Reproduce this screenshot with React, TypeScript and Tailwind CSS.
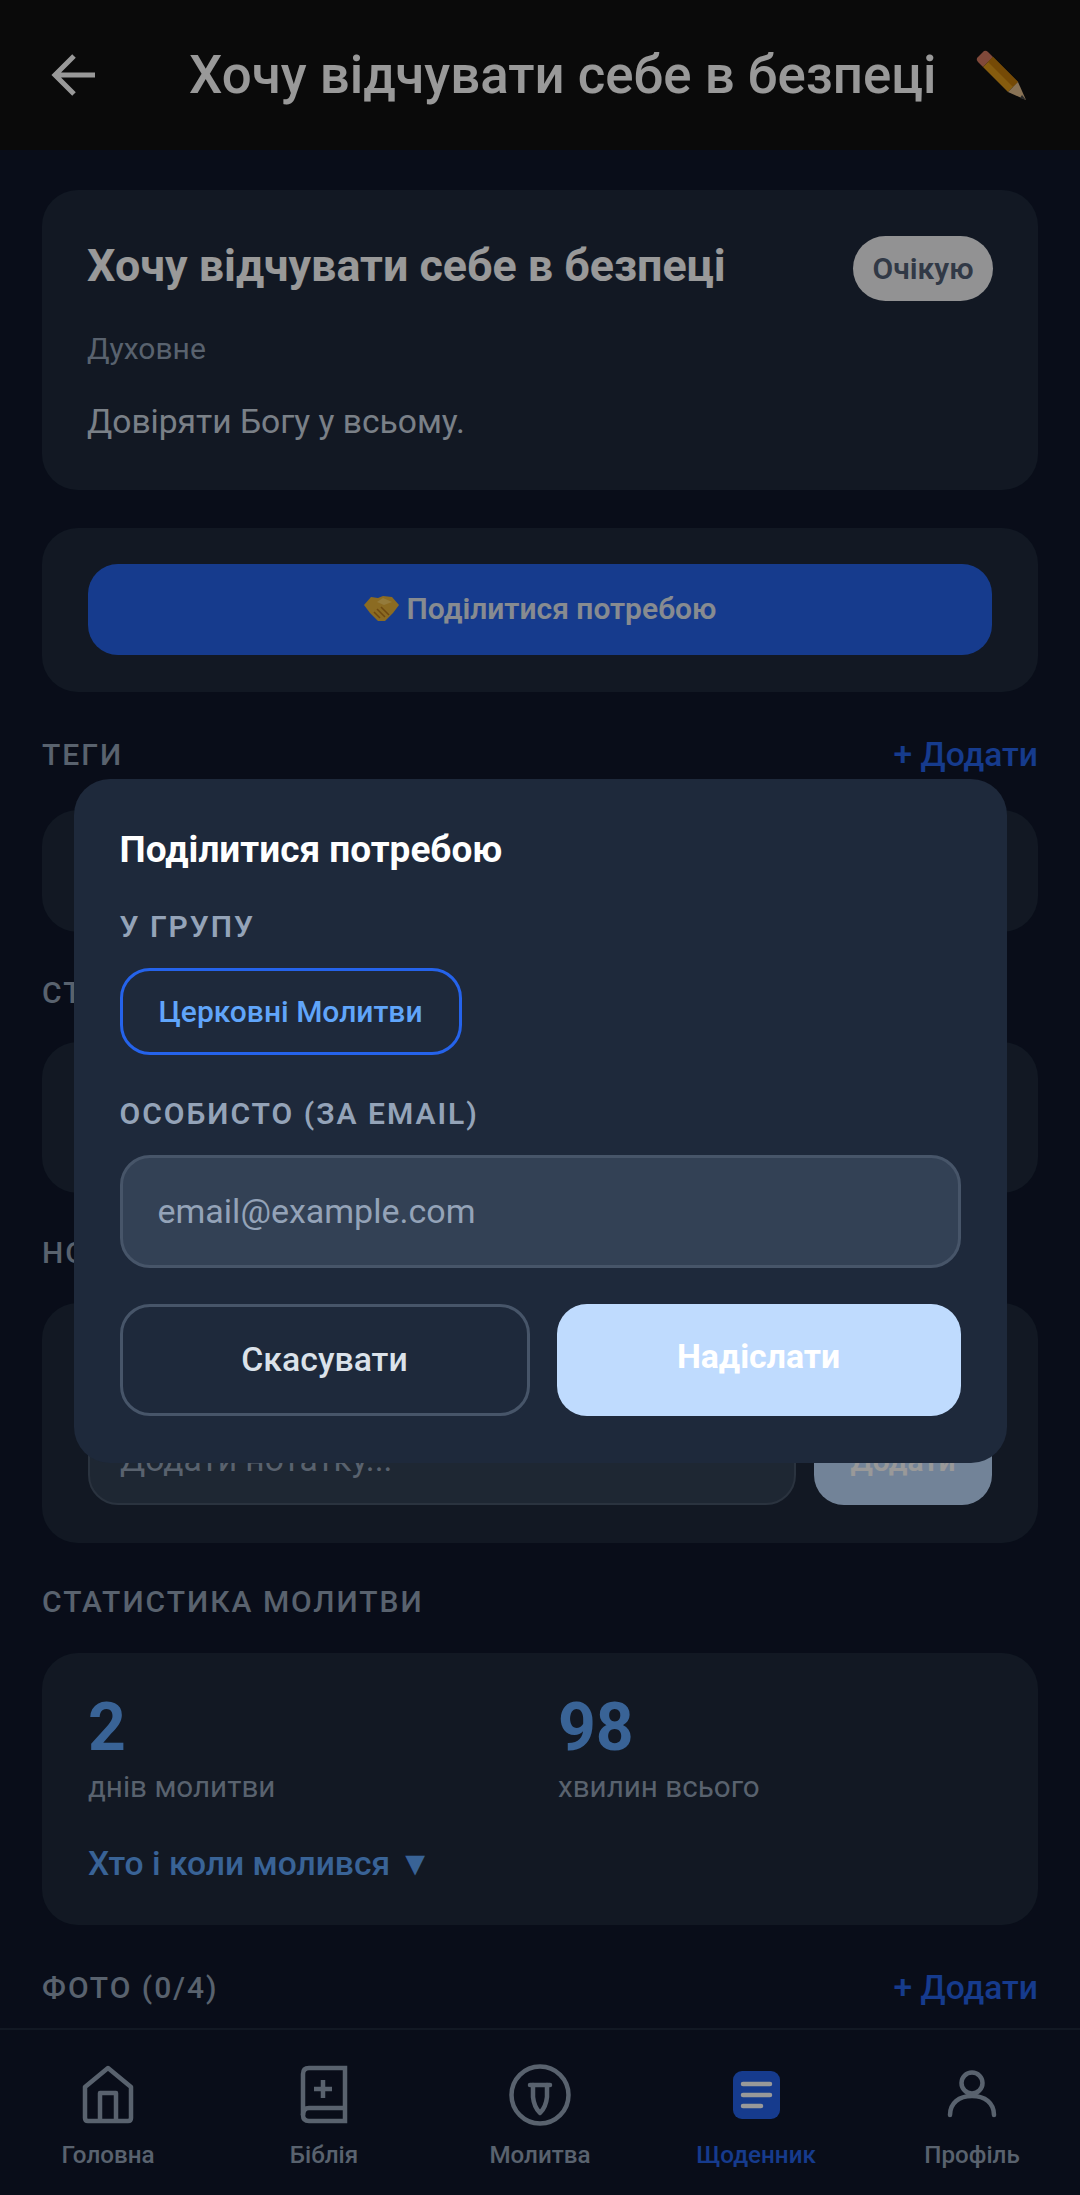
import type { ReactNode } from 'react';

function Card({ className, children }: { className?: string; children?: ReactNode }) {
  return <div className={`rounded-[36px] bg-[#1e293b] ${className ?? ''}`}>{children}</div>;
}

function Label({ children, className }: { children: ReactNode; className?: string }) {
  return (
    <div className={`text-[30px] leading-[40px] font-medium tracking-[2px] text-[#94a3b8] ${className ?? ''}`}>
      {children}
    </div>
  );
}

function AddLink() {
  return <span className="text-[33.6px] leading-[40px] font-medium text-[#2563eb]">+ Додати</span>;
}

function Pencil() {
  return (
    <svg width="56" height="56" viewBox="0 0 56 56" className="shrink-0">
      <path d="M3 11 L10 4 Q12 3 14 5 L19 10 L9 20 L4 15 Q2 13 3 11 Z" fill="#d67a62" />
      <path d="M9 20 L19 10 L44 35 L34 45 Z" fill="#e09a18" />
      <path d="M14 15 L19 10 L44 35 L39 40 Z" fill="#c47c0a" />
      <path d="M34 45 L44 35 L52 53 Z" fill="#e5c090" />
      <path d="M48 48 L52 53 L46 51 Z" fill="#4a4a4a" />
    </svg>
  );
}

function Handshake() {
  return (
    <svg width="35" height="27" viewBox="0 0 35 27" className="shrink-0">
      <path d="M0 10 L7 2 L14 3 L19 1 L28 2 L35 10 L29 18 L21 26 L14 26 L6 18 Z" fill="#e8b23a" />
      <path d="M13 7 L19 3 L28 7 L20 10 Z" fill="#f7cd63" />
      <path d="M17 12 L25 20 M13 14 L21 22 M10 17 L16 23" stroke="#b87a1c" strokeWidth="1.6" fill="none" />
    </svg>
  );
}

function NavItem({ label, active, children }: { label: string; active?: boolean; children: ReactNode }) {
  return (
    <div className="flex w-[216px] flex-col items-center">
      <div className="flex h-[64px] w-[64px] items-center justify-center">{children}</div>
      <span className={`mt-[12px] text-[24.2px] leading-[32px] font-medium ${active ? 'text-[#2563eb]' : 'text-[#94a3b8]'}`}>
        {label}
      </span>
    </div>
  );
}

export default function App() {
  return (
    <div className="relative h-[2195px] w-[1080px] overflow-hidden bg-[#0f172a] font-['Roboto',sans-serif]">
      <header className="flex h-[150px] items-center bg-[#111111] pr-[50px] pl-[50px]">
        <svg width="46" height="46" viewBox="0 0 46 46" fill="none" stroke="#ffffff" strokeWidth="5" className="shrink-0">
          <path d="M45 23 H6 M24 4 L5 23 L24 42" />
        </svg>
        <h1 className="ml-[93px] flex-1 text-[52.8px] leading-[60px] font-medium whitespace-nowrap text-white">
          Хочу відчувати себе в безпеці
        </h1>
        <Pencil />
      </header>

      <main className="px-[42px] pt-[40px]">
        <Card className="h-[300px] px-[45px] pt-[46px]">
          <div className="flex h-[65px] items-center justify-between">
            <h2 className="pb-[6px] text-[44.8px] leading-[50px] font-bold text-white">Хочу відчувати себе в безпеці</h2>
            <span className="flex h-[65px] w-[140px] items-center justify-center rounded-full bg-[#f3f4f6] text-[30px] font-semibold text-[#526075]">
              Очікую
            </span>
          </div>
          <p className="mt-[28px] text-[30px] leading-[40px] text-[#94a3b8]">Духовне</p>
          <p className="mt-[30px] text-[33.6px] leading-[46px] text-[#cbd5e1]">Довіряти Богу у всьому.</p>
        </Card>

        <Card className="mt-[38px] h-[164px] px-[46px] pt-[36px]">
          <button className="flex h-[91px] w-full items-center justify-center gap-[8px] rounded-[30px] bg-[#2563eb] pb-[2px] text-[30px] font-semibold text-[#e2e8f0]">
            <Handshake />
            Поділитися потребою
          </button>
        </Card>

        <div className="mt-[43px] mb-[35px] flex items-center justify-between">
          <Label>ТЕГИ</Label>
          <AddLink />
        </div>
        <Card className="h-[122px]" />

        <Label className="mt-[41px] mb-[29px]">СТАТУС</Label>
        <Card className="h-[151px]" />

        <Label className="mt-[40px] mb-[30px]">НОТАТКИ</Label>
        <Card className="flex h-[240px] items-end gap-[18px] px-[46px] pb-[38px]">
          <div className="flex h-[90px] flex-1 items-center rounded-[30px] border-2 border-[#475569] bg-[#334155] px-[30px] text-[33.6px] text-[#94a3b8]">
            Додати нотатку...
          </div>
          <button className="flex h-[90px] w-[178px] items-center justify-center rounded-[30px] bg-[#bfdbfe] text-[30px] font-semibold text-white">
            Додати
          </button>
        </Card>

        <Label className="mt-[39px] mb-[31px]">СТАТИСТИКА МОЛИТВИ</Label>
        <Card className="h-[272px] px-[46px] pt-[40px]">
          <div className="flex">
            <div className="w-[470px]">
              <div className="text-[66px] leading-[70px] font-bold text-[#60a5fa]">2</div>
              <div className="mt-[6px] text-[29.6px] leading-[36px] text-[#94a3b8]">днів молитви</div>
            </div>
            <div>
              <div className="text-[66px] leading-[70px] font-bold text-[#60a5fa]">98</div>
              <div className="mt-[6px] text-[29.6px] leading-[36px] text-[#94a3b8]">хвилин всього</div>
            </div>
          </div>
          <div className="mt-[37px] text-[33.6px] leading-[44px] font-medium text-[#60a5fa]">Хто і коли молився ▼</div>
        </Card>

        <div className="mt-[43px] flex items-center justify-between">
          <Label>ФОТО (0/4)</Label>
          <AddLink />
        </div>
      </main>

      <nav className="absolute inset-x-0 bottom-0 flex h-[167px] border-t-2 border-[#1e293b] bg-[#0f172a] pt-[33px]">
        <NavItem label="Головна">
          <svg width="54" height="60" viewBox="0 0 54 60" fill="none" stroke="#94a3b8" strokeWidth="4.5" strokeLinejoin="round">
            <path d="M27 3 L50 22 V53 Q50 56 47 56 H7 Q4 56 4 53 V22 Z" />
            <path d="M19 56 V28 H35 V56" />
          </svg>
        </NavItem>
        <NavItem label="Біблія">
          <svg width="50" height="60" viewBox="0 0 50 60" fill="none" stroke="#94a3b8" strokeWidth="4.5">
            <path d="M46 3 H10 Q4 3 4 9 V50 Q4 56 10 56 H46 Z" />
            <path d="M4 50 Q4 43 10 43 H46" />
            <path d="M24 15 V33 M15 24 H33" />
          </svg>
        </NavItem>
        <NavItem label="Молитва">
          <svg width="64" height="64" viewBox="0 0 64 64" fill="none" stroke="#94a3b8" strokeWidth="4.5" strokeLinecap="round">
            <circle cx="32" cy="32" r="28.5" />
            <path d="M22 22 H42" />
            <path d="M25 22 V34 Q26 44 32 50 Q38 44 39 34 V22" strokeLinejoin="round" />
          </svg>
        </NavItem>
        <NavItem label="Щоденник" active>
          <svg width="47" height="48" viewBox="0 0 47 48">
            <rect width="47" height="48" rx="9" fill="#2563eb" />
            <path d="M10 13 H37 M10 24 H37 M10 35 H28" stroke="#ffffff" strokeWidth="4.5" strokeLinecap="round" />
          </svg>
        </NavItem>
        <NavItem label="Профіль">
          <svg width="50" height="52" viewBox="0 0 50 52" fill="none" stroke="#94a3b8" strokeWidth="4.5" strokeLinecap="round">
            <circle cx="25" cy="14" r="10.5" />
            <path d="M3 46 C3 34 12 27 25 27 C38 27 47 34 47 46" />
          </svg>
        </NavItem>
      </nav>

      {/* backdrop dims the whole page, modal sits on top */}
      <div className="absolute inset-0 flex justify-center bg-black/40 pt-[779px]">
        <div className="h-[684px] w-[933px] rounded-[36px] bg-[#1e293b] px-[46px] pt-[48px]">
          <h3 className="text-[37px] leading-[46px] font-bold text-white">Поділитися потребою</h3>
          <Label className="mt-[34px] font-semibold">У ГРУПУ</Label>
          <button className="mt-[21px] flex h-[87px] w-[342px] items-center justify-center rounded-[30px] border-[3px] border-[#2563eb] text-[30px] font-medium text-[#60a5fa]">
            Церковні Молитви
          </button>
          <Label className="mt-[39px] font-semibold">ОСОБИСТО (ЗА EMAIL)</Label>
          <div className="mt-[21px] flex h-[113px] items-center rounded-[30px] border-[3px] border-[#475569] bg-[#334155] px-[35px] text-[34px] text-[#94a3b8]">
            email@example.com
          </div>
          <div className="mt-[36px] flex gap-[27px]">
            <button className="flex h-[112px] w-[411px] items-center justify-center rounded-[30px] border-[3px] border-[#475569] text-[33.8px] font-medium text-[#dbe2ea]">
              Скасувати
            </button>
            <button className="flex h-[112px] w-[405px] items-center justify-center rounded-[30px] bg-[#bfdbfe] pb-[6px] text-[33.8px] font-bold text-white">
              Надіслати
            </button>
          </div>
        </div>
      </div>
    </div>
  );
}
